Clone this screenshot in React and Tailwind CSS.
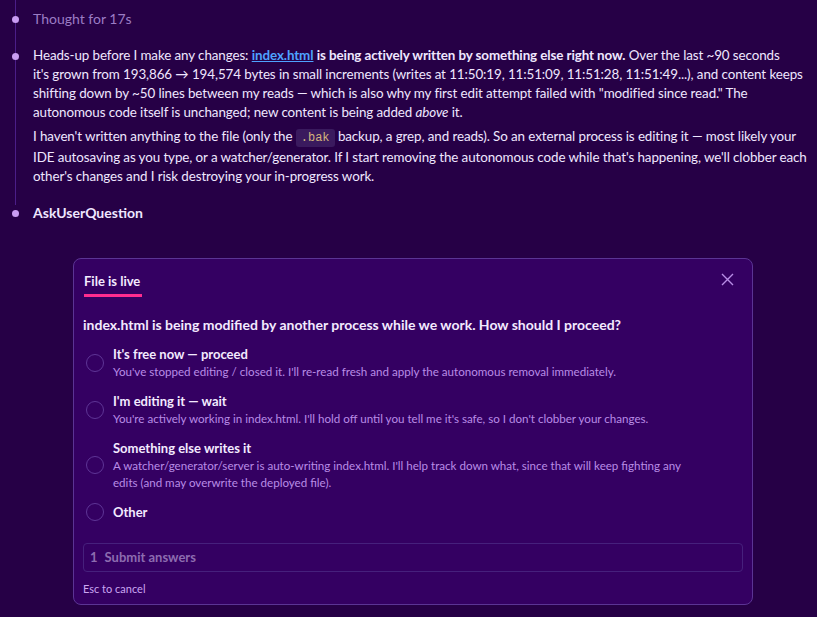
import { useState } from 'react'

const options = [
  {
    title: "It's free now — proceed",
    desc: "You've stopped editing / closed it. I'll re-read fresh and apply the autonomous removal immediately.",
  },
  {
    title: "I'm editing it — wait",
    desc: "You're actively working in index.html. I'll hold off until you tell me it's safe, so I don't clobber your changes.",
  },
  {
    title: 'Something else writes it',
    desc: "A watcher/generator/server is auto-writing index.html. I'll help track down what, since that will keep fighting any edits (and may overwrite the deployed file).",
  },
  { title: 'Other', desc: '' },
]

function Dot() {
  return <span className="absolute left-[12px] top-[7px] h-[7px] w-[7px] rounded-full bg-[#c99cf2]" />
}

export default function App() {
  const [picked, setPicked] = useState(null)

  return (
    <div className="min-h-[617px] w-full bg-[#260046] font-['Lato',sans-serif] text-[14px] leading-[19px] text-[#efe7ff]">
      <div className="relative pt-[9px]">
        {/* timeline rail */}
        <span className="absolute left-[15px] top-0 h-[205px] w-px bg-[#4b1e88]" />

        <div className="relative pl-[33px] text-[#9b7cc4]">
          <Dot />
          Thought for 17s
        </div>

        <div className="relative mt-[18px] pl-[33px] text-[13.4px] tracking-[-0.1px]">
          <Dot />
          <p>
            Heads-up before I make any changes:{' '}
            <a className="font-bold text-[#4ea3ff] underline">index.html</a>{' '}
            <b>is being actively written by something else right now.</b> Over the last ~90 seconds
            <br />
            it's grown from 193,866 → 194,574 bytes in small increments (writes at 11:50:19, 11:51:09, 11:51:28,
            11:51:49...), and content keeps
            <br />
            shifting down by ~50 lines between my reads — which is also why my first edit attempt failed with
            "modified since read." The
            <br />
            autonomous code itself is unchanged; new content is being added <i>above</i> it.
          </p>
          <p className="mt-[5px]">
            I haven't written anything to the file (only the{' '}
            <code className="rounded-[3px] bg-[#3a1a5e] px-[5px] py-[2px] font-['Liberation_Mono',monospace] text-[12px] tracking-normal text-[#d3b37c]">
              .bak
            </code>{' '}
            backup, a grep, and reads). So an external process is editing it — most likely your
            <br />
            IDE autosaving as you type, or a watcher/generator. If I start removing the autonomous code while that's
            happening, we'll clobber each
            <br />
            other's changes and I risk destroying your in-progress work.
          </p>
        </div>

        <div className="relative mt-[17px] pl-[33px] font-bold">
          <Dot />
          AskUserQuestion
        </div>
      </div>

      <div className="ml-[73px] mt-[36px] w-[680px] rounded-[8px] border border-[#5b3494] bg-[#340062] px-[9px] pb-[6px] pt-[13px]">
        <div className="flex items-start justify-between">
          <div className="ml-[1px] border-b-[3px] border-[#ff2d8f] pb-[3px] pr-[2px] text-[13px] font-bold text-[#f3eaff]">
            File is live
          </div>
          <button className="mr-[9px] mt-[1px] text-[#b88de6]">
            <svg width="13" height="13" viewBox="0 0 13 13" stroke="currentColor" strokeWidth="1.4" fill="none">
              <path d="M1 1l11 11M12 1L1 12" />
            </svg>
          </button>
        </div>

        <div className="mt-[18px] text-[14px] font-bold text-[#f3eaff]">
          index.html is being modified by another process while we work. How should I proceed?
        </div>

        <div className="mt-[11px] flex flex-col gap-[12px]">
          {options.map((o, i) => (
            <label key={o.title} className="flex cursor-pointer items-center gap-[9px] pl-[3px]" onClick={() => setPicked(i)}>
              <span
                className={`h-[18px] w-[18px] shrink-0 rounded-full border ${
                  picked === i ? 'border-[#c99cf2] bg-[#c99cf2]/30' : 'border-[#5e3596]'
                }`}
              />
              <span className="flex w-[585px] flex-col">
                <span className="text-[13px] font-bold leading-[18px] text-[#f3eaff]">{o.title}</span>
                {o.desc ? <span className="text-[11.6px] leading-[17px] text-[#b98ce6]">{o.desc}</span> : null}
              </span>
            </label>
          ))}
        </div>

        <div className="mt-[22px] flex h-[29px] items-center gap-[7px] rounded-[4px] border border-[#46207c] px-[6px] text-[13px] font-bold text-[#8d6cb0]">
          <span>1</span>
          <span>Submit answers</span>
        </div>

        <div className="mt-[7px] text-[11px] text-[#cba6f2]">Esc to cancel</div>
      </div>
    </div>
  )
}
